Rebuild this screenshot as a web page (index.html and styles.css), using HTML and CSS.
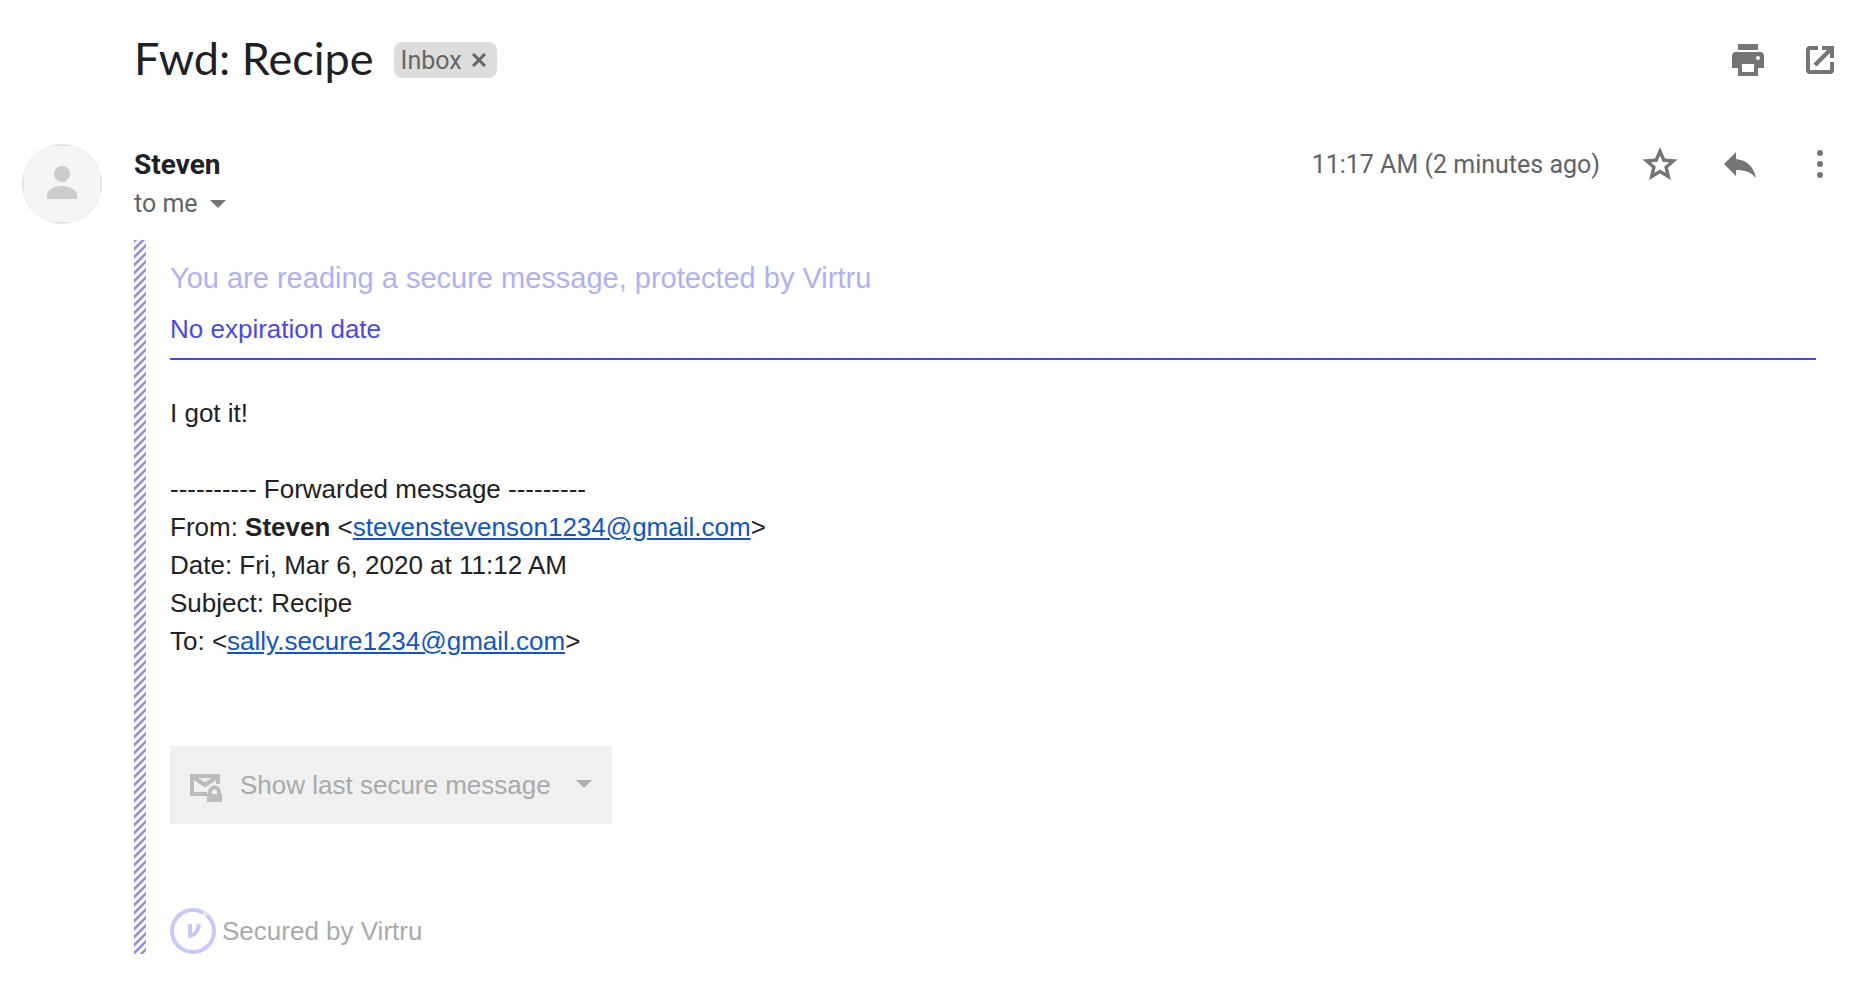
FILE: index.html
```html
<!DOCTYPE html>
<html lang="en">
<head>
    <meta charset="UTF-8">
    <meta name="viewport" content="width=device-width, initial-scale=1.0">
    <title>Fwd: Recipe</title>
    <link rel="stylesheet" href="styles.css">
</head>
<body>
    <header class="subject-bar">
        <h1 class="subject">Fwd: Recipe</h1>
        <div class="label">
            <span>Inbox</span>
            <button type="button" class="label-remove" aria-label="Remove label Inbox">
                <svg width="14" height="14" viewBox="0 0 14 14"><path d="M1 1l12 12M13 1L1 13" stroke="#666" stroke-width="3"/></svg>
            </button>
        </div>
        <div class="subject-actions">
            <button type="button" class="icon-button" aria-label="Print all">
                <svg width="40" height="40" viewBox="0 0 40 40" fill="#757575"><path d="M10 4h20v6H10z"/><path fill-rule="evenodd" d="M8 12h24a4 4 0 0 1 4 4v12h-6v8H10v-8H4V16a4 4 0 0 1 4-4zm6 12v8h12v-8zm16-8a2 2 0 1 0 0 4 2 2 0 0 0 0-4z"/></svg>
            </button>
            <button type="button" class="icon-button" aria-label="In new window">
                <svg width="40" height="40" viewBox="0 0 40 40" fill="#757575"><path d="M10 6h8v4h-8v20h20v-8h4v8a4 4 0 0 1-4 4H10a4 4 0 0 1-4-4V10a4 4 0 0 1 4-4z"/><path d="M22 6h12v12h-4v-5L16.500 26.500l-3-3L27 10h-5z"/></svg>
            </button>
        </div>
    </header>

    <main class="message">
        <svg class="avatar" width="80" height="80" viewBox="0 0 80 80">
            <circle cx="40" cy="40" r="40" fill="#e2e2e2"/>
            <clipPath id="avatar-clip"><rect x="2" y="2" width="76" height="76"/></clipPath>
            <circle cx="40" cy="40" r="39.500" fill="#f5f5f5" clip-path="url(#avatar-clip)"/>
            <circle cx="40" cy="30" r="8" fill="#ccc"/>
            <path d="M25 55v-4c0-5 7-9 15-9s15 4 15 9v4z" fill="#ccc"/>
        </svg>
        <div class="message-content">
            <div class="message-header">
                <div class="sender">
                    <div class="sender-name">Steven</div>
                    <button type="button" class="recipient">to me
                        <svg width="16" height="8" viewBox="0 0 16 8"><path d="M0 0h16L8 8z" fill="#757575"/></svg>
                    </button>
                </div>
                <div class="message-actions">
                    <span class="time">11:17 AM (2 minutes ago)</span>
                    <button type="button" class="icon-button" aria-label="Star">
                        <svg width="40" height="40" viewBox="0 0 40 40" fill="#757575"><path fill-rule="evenodd" d="M20 3l5 11.500 12.500 1.100-9.500 8.200L30.900 36 20 29.500 9.100 36 12 23.800l-9.500-8.200L15 14.500zM20 11.500l-2.600 6.300-6.500.6 4.900 4.200-1.500 6.400L20 25.600l5.700 3.400-1.500-6.400 4.900-4.200-6.500-.6z"/></svg>
                    </button>
                    <button type="button" class="icon-button" aria-label="Reply">
                        <svg width="40" height="40" viewBox="0 0 40 40"><path d="M4 20L16 8v7c11 1 18 8 20 19-5-6-11-8-20-8v6z" fill="#757575"/></svg>
                    </button>
                    <button type="button" class="icon-button" aria-label="More">
                        <svg width="40" height="40" viewBox="0 0 40 40" fill="#757575"><circle cx="20" cy="9" r="3"/><circle cx="20" cy="20" r="3"/><circle cx="20" cy="31" r="3"/></svg>
                    </button>
                </div>
            </div>

            <div class="secure-message">
                <div class="secure-body">
                    <div class="secure-banner">
                        <div class="secure-title">You are reading a secure message, protected by Virtru</div>
                        <div class="expiration">No expiration date</div>
                    </div>
                    <div class="mail-text">
                        <p>I got it!</p>
                        <p>
                            ---------- Forwarded message ---------<br>
                            From: <b>Steven</b> &lt;<a href="mailto:stevenstevenson1234@gmail.com">stevenstevenson1234@gmail.com</a>&gt;<br>
                            Date: Fri, Mar 6, 2020 at 11:12 AM<br>
                            Subject: Recipe<br>
                            To: &lt;<a href="mailto:sally.secure1234@gmail.com">sally.secure1234@gmail.com</a>&gt;
                        </p>
                    </div>
                    <button type="button" class="show-last">
                        <svg width="32" height="34" viewBox="0 0 32 34"><path d="M17 26H2V8h26v8" fill="none" stroke="#bcbcbc" stroke-width="4"/><path d="M3 9l12 8L27 9" fill="none" stroke="#bcbcbc" stroke-width="4"/><path d="M17 26h15v8H17z" fill="#bcbcbc"/><path d="M20 27v-3a4.500 4.500 0 0 1 9 0v3" fill="none" stroke="#bcbcbc" stroke-width="4"/></svg>
                        <span>Show last secure message</span>
                        <svg class="caret" width="16" height="10" viewBox="0 0 16 10"><path d="M0 0h16L8 8z" fill="#b0b0b0"/></svg>
                    </button>
                    <div class="secured-by">
                        <svg width="46" height="46" viewBox="0 0 46 46" fill="none" stroke="#c9c8fa">
                            <circle cx="23" cy="23" r="21" stroke-width="4"/>
                            <path d="M32 6l4 3" stroke="#fff" stroke-opacity=".6" stroke-width="7"/>
                            <path d="M20 16v12Q28 26 29 16" stroke-width="4"/>
                        </svg>
                        <span>Secured by Virtru</span>
                    </div>
                </div>
            </div>
        </div>
    </main>
</body>
</html>
```

FILE: styles.css
```css
body {
    margin: 0;
    background: #fff;
    color: #202124;
    font-family: Roboto, 'Liberation Sans', sans-serif;
    font-size: 25px;
}
button {
    padding: 0;
    border: none;
    background: none;
    font: inherit;
    color: inherit;
    cursor: pointer;
}
svg {
    display: block;
    flex: none;
}
.subject-bar {
    display: flex;
    align-items: center;
    height: 120px;
    padding: 0 36px 0 134px;
}
.subject {
    margin: 0;
    padding-bottom: 4px;
    font-family: Lato, sans-serif;
    font-size: 45px;
    font-weight: 400;
    line-height: 56px;
}
.label {
    display: flex;
    align-items: center;
    gap: 10px;
    height: 36px;
    margin-left: 20px;
    padding: 0 11px 0 7px;
    border-radius: 8px;
    background: #ddd;
    color: #666;
}
.subject-actions {
    display: flex;
    gap: 32px;
    margin-left: auto;
}
.message {
    display: flex;
    gap: 32px;
    padding: 24px 36px 50px 22px;
}
.message-content {
    flex: 1;
}
.message-header {
    display: flex;
    justify-content: space-between;
    height: 96px;
}
.sender-name {
    font-size: 28px;
    font-weight: 700;
    line-height: 42px;
}
.recipient {
    display: flex;
    align-items: center;
    gap: 12px;
    line-height: 36px;
    color: #5f6368;
}
.message-actions {
    display: flex;
    align-items: center;
    gap: 40px;
    height: 40px;
}
.time {
    color: #5f6368;
}
.secure-message {
    display: flex;
    gap: 24px;
    padding-right: 24px;
    font-family: 'Liberation Sans', Arial, sans-serif;
    font-size: 26px;
}
/* striped bar on the left */
.secure-message::before {
    content: '';
    width: 12px;
    background: linear-gradient(135deg, #8c8cff 16%, #fff 22%, #fff 44%, #8c8cff 50%, #8c8cff 66%, #fff 72%, #fff 94%, #8c8cff) 0 0 / 8px 8px;
}
.secure-body {
    flex: 1;
    padding-top: 18px;
}
.secure-banner {
    border-bottom: 2px solid #4848f0;
}
.secure-title {
    font-size: 29px;
    line-height: 40px;
    color: #b1aff8;
}
.expiration {
    padding: 12px 0 10px;
    line-height: 38px;
    color: #4848f0;
}
.mail-text {
    padding-top: 34px;
    line-height: 38px;
    color: #222;
}
.mail-text p {
    margin: 0 0 38px;
}
.mail-text a {
    color: #15c;
}
.show-last {
    display: flex;
    align-items: center;
    gap: 18px;
    height: 78px;
    margin-top: 86px;
    padding: 0 20px;
    background: #f0f0f0;
    color: #a9aaac;
}
.caret {
    margin-left: 7px;
}
.secured-by {
    display: flex;
    align-items: center;
    gap: 6px;
    margin-top: 84px;
    color: #a9aaac;
}
```
